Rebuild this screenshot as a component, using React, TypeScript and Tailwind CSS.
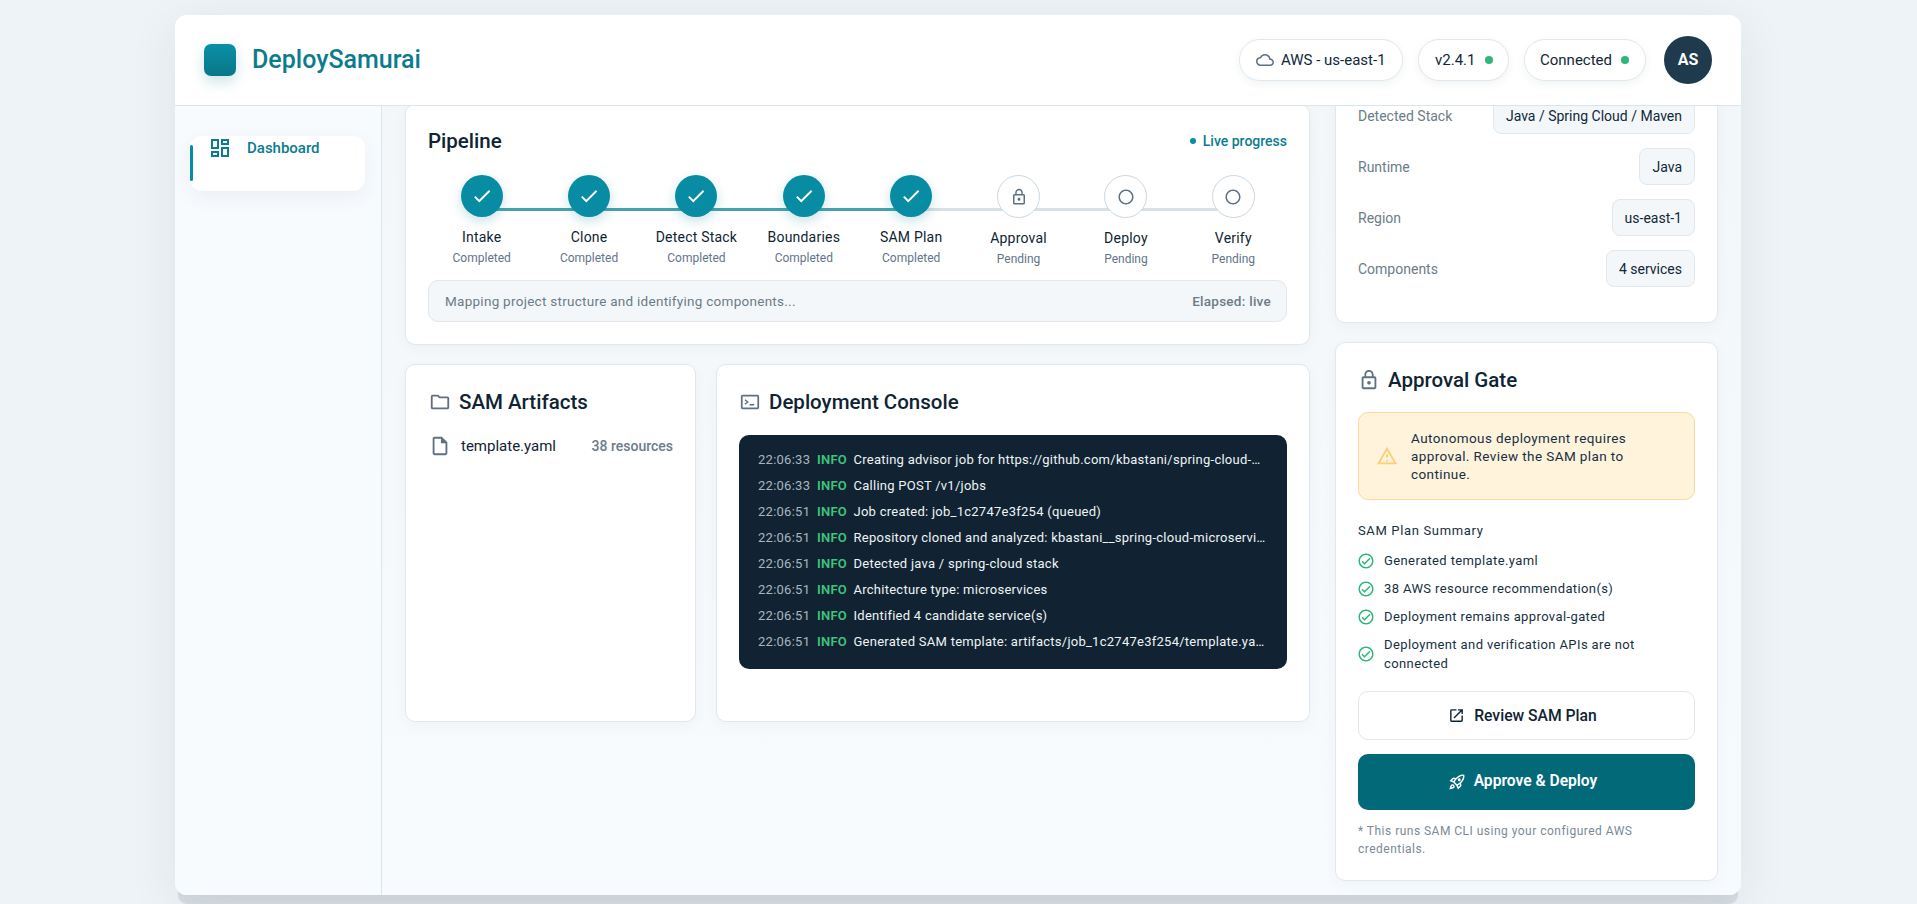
import React from "react";
import {
  MdCheck,
  MdLockOutline,
  MdOpenInNew,
  MdOutlineCheckCircle,
  MdOutlineCloud,
  MdOutlineDashboard,
  MdOutlineFolder,
  MdOutlineInsertDriveFile,
  MdOutlineRocketLaunch,
  MdOutlineWarningAmber,
  MdRadioButtonUnchecked,
} from "react-icons/md";

const steps = [
  ["Intake", "Completed", "done"],
  ["Clone", "Completed", "done"],
  ["Detect Stack", "Completed", "done"],
  ["Boundaries", "Completed", "done"],
  ["SAM Plan", "Completed", "done"],
  ["Approval", "Pending", "lock"],
  ["Deploy", "Pending", "idle"],
  ["Verify", "Pending", "idle"],
];

const logs = [
  ["22:06:33", "Creating advisor job for https://github.com/kbastani/spring-cloud-…"],
  ["22:06:33", "Calling POST /v1/jobs"],
  ["22:06:51", "Job created: job_1c2747e3f254 (queued)"],
  ["22:06:51", "Repository cloned and analyzed: kbastani__spring-cloud-microservi…"],
  ["22:06:51", "Detected java / spring-cloud stack"],
  ["22:06:51", "Architecture type: microservices"],
  ["22:06:51", "Identified 4 candidate service(s)"],
  ["22:06:51", "Generated SAM template: artifacts/job_1c2747e3f254/template.ya…"],
];

const facts = [
  ["Detected Stack", "Java / Spring Cloud / Maven"],
  ["Runtime", "Java"],
  ["Region", "us-east-1"],
  ["Components", "4 services"],
];

const summary = [
  "Generated template.yaml",
  "38 AWS resource recommendation(s)",
  "Deployment remains approval-gated",
  "Deployment and verification APIs are not connected",
];

function Card({ className, children }: { className?: string; children: React.ReactNode }) {
  return (
    <div className={"rounded-[10px] border border-[#e0e8ed] bg-white shadow-[0_4px_14px_rgba(20,50,70,0.04)] " + (className ?? "")}>
      {children}
    </div>
  );
}

function Pill({ className, children }: { className?: string; children: React.ReactNode }) {
  return (
    <div className={"flex h-[42px] items-center rounded-full border border-[#dfe8ed] bg-white text-[15px] text-[#10283a] shadow-[0_3px_10px_rgba(20,50,70,0.06)] " + (className ?? "")}>
      {children}
    </div>
  );
}

function TerminalIcon() {
  return (
    <svg viewBox="0 0 24 24" className="h-[22px] w-[22px] text-[#5f7180]" fill="none" stroke="currentColor" strokeWidth="1.9">
      <rect x="3" y="5" width="18" height="14" rx="1" />
      <path d="M6.5 9.5 9.5 12l-3 2.5M11.5 15h5" strokeWidth="1.6" />
    </svg>
  );
}

export default function App() {
  return (
    <div className="flex h-[904px] justify-center overflow-hidden bg-[#eef3f7] pt-[15px] font-['Roboto',sans-serif]">
      <div className="ml-[-1px] flex h-[880px] w-[1566px] flex-col overflow-hidden rounded-[12px] bg-white shadow-[0_12px_1px_-3px_rgba(20,40,55,0.11),0_10px_50px_rgba(20,40,55,0.08)]">
        <header className="flex h-[91px] shrink-0 items-center justify-between border-b border-[#dbe6ec] bg-white pl-[29px] pr-[29px]">
          <div className="flex items-center gap-[16px]">
            <div className="h-[32px] w-[32px] rounded-[7px] bg-gradient-to-b from-[#0a90a6] to-[#0a7688] shadow-[0_6px_14px_rgba(10,120,140,0.2)]" />
            <span className="text-[25px] font-medium text-[#0b7c8e]">DeploySamurai</span>
          </div>
          <div className="flex items-center">
            <Pill className="w-[164px] gap-[7px] pl-[16px]">
              <MdOutlineCloud className="h-[18px] w-[18px] text-[#5f7180]" />
              <span>AWS - us-east-1</span>
            </Pill>
            <Pill className="ml-[15px] w-[91px] pl-[16px]">
              <span>v2.4.1</span>
              <span className="ml-[10px] h-[8px] w-[8px] rounded-full bg-[#2fb67c]" />
            </Pill>
            <Pill className="ml-[15px] w-[122px] pl-[15px]">
              <span>Connected</span>
              <span className="ml-[9px] h-[8px] w-[8px] rounded-full bg-[#2fb67c]" />
            </Pill>
            <div className="ml-[18px] flex h-[48px] w-[48px] items-center justify-center rounded-full bg-[#1e3a4c] text-[16px] font-bold text-white">
              AS
            </div>
          </div>
        </header>

        <div className="flex min-h-0 flex-1">
          <aside className="w-[207px] shrink-0 border-r border-[#dbe6ec] bg-[#f8fbfe] pl-[15px] pr-[16px] pt-[30px]">
            <div className="relative flex h-[55px] items-start gap-[15px] rounded-[12px] bg-white pl-[18px] shadow-[0_6px_20px_rgba(20,50,70,0.06)]">
              <span className="absolute left-0 top-[9px] h-[36px] w-[3px] rounded-full bg-[#078ca3]" />
              <MdOutlineDashboard className="h-[24px] w-[24px] text-[#0b7c8e]" />
              <span className="pt-[2px] text-[15px] font-medium leading-[20px] text-[#0b7c8e]">Dashboard</span>
            </div>
          </aside>

          <main className="flex min-w-0 flex-1 gap-[25px] overflow-hidden bg-gradient-to-b from-[#f3f7f9] to-[#f8fbfe] pl-[23px] pr-[23px]">
            <div className="-mt-[2px] flex w-[905px] shrink-0 flex-col gap-[19px]">
              <Card className="h-[241px] px-[22px] pt-[22px]">
                <div className="flex h-[28px] items-center justify-between">
                  <span className="text-[20.5px] font-medium text-[#0f2433]">Pipeline</span>
                  <span className="flex items-center gap-[7px] text-[14px] font-medium text-[#0b7c8e]">
                    <span className="h-[6px] w-[6px] rounded-full bg-[#078ca3]" />
                    Live progress
                  </span>
                </div>
                <div className="mt-[20px] flex">
                  {steps.map(([label, status, kind], i) => (
                    <div key={label} className="relative flex flex-1 flex-col items-center">
                      {i < steps.length - 1 && (
                        <span className={"absolute left-1/2 top-[33px] h-[3px] w-full " + (i < 4 ? "bg-[#45a3b0]" : "bg-[#d6e0e5]")} />
                      )}
                      {kind === "done" ? (
                        <div className="relative flex h-[42px] w-[42px] items-center justify-center rounded-full bg-[#078ca3] shadow-[0_4px_12px_rgba(10,120,140,0.22)]">
                          <MdCheck className="h-[22px] w-[22px] text-white" />
                        </div>
                      ) : (
                        <div className="relative flex h-[43px] w-[43px] items-center justify-center rounded-full border border-[#ccd7de] bg-white text-[#5f7180]">
                          {kind === "lock" ? (
                            <MdLockOutline className="h-[18px] w-[18px]" />
                          ) : (
                            <MdRadioButtonUnchecked className="h-[18px] w-[18px]" />
                          )}
                        </div>
                      )}
                      <span className="mt-[10px] text-[14px] leading-[20px] tracking-[0.015em] text-[#0f2433]">{label}</span>
                      <span className="mt-[3px] text-[12px] leading-[16px] text-[#64748b]">{status}</span>
                    </div>
                  ))}
                </div>
                <div className="mt-[13px] flex h-[42px] items-center justify-between rounded-[10px] border border-[#e0e8ed] bg-[#f4f7f9] pl-[16px] pr-[15px] text-[13.5px] text-[#6b7c88]">
                  <span className="tracking-[0.02em]">Mapping project structure and identifying components...</span>
                  <span className="font-medium tracking-[0.02em]">Elapsed: live</span>
                </div>
              </Card>

              <div className="flex h-[358px] gap-[20px]">
                <Card className="w-[291px] shrink-0 pl-[23px] pr-[22px] pt-[23px]">
                  <div className="flex h-[28px] items-center gap-[8px]">
                    <MdOutlineFolder className="h-[22px] w-[22px] text-[#5f7180]" />
                    <span className="text-[20.5px] font-medium text-[#0f2433]">SAM Artifacts</span>
                  </div>
                  <div className="mt-[18px] flex h-[24px] items-center">
                    <MdOutlineInsertDriveFile className="h-[22px] w-[22px] text-[#5f7180]" />
                    <span className="ml-[10px] text-[15px] text-[#0f2433]">template.yaml</span>
                    <span className="ml-auto text-[14px] font-medium text-[#6b7c88]">38 resources</span>
                  </div>
                </Card>
                <Card className="min-w-0 flex-1 px-[22px] pt-[23px]">
                  <div className="flex h-[28px] items-center gap-[8px]">
                    <TerminalIcon />
                    <span className="text-[20.5px] font-medium text-[#0f2433]">Deployment Console</span>
                  </div>
                  <div className="mt-[19px] rounded-[10px] bg-[#112332] pb-[14px] pl-[19px] pr-[18px] pt-[12px] text-[13px] leading-[26px] tracking-[0.02em]">
                    {logs.map(([time, msg], i) => (
                      <div key={i} className="flex h-[26px] whitespace-nowrap">
                        <span className="w-[59px] shrink-0 text-[#aab6bf]">{time}</span>
                        <span className="w-[36.5px] shrink-0 font-semibold text-[#3cc47c]">INFO</span>
                        <span className="min-w-0 flex-1 text-[#eef3f6]">{msg}</span>
                      </div>
                    ))}
                  </div>
                </Card>
              </div>
            </div>

            <div className="-mt-[60px] flex w-[383px] shrink-0 flex-col gap-[19px]">
              <Card className="flex h-[277px] shrink-0 flex-col gap-[14px] px-[22px] pt-[50px]">
                {facts.map(([k, v]) => (
                  <div key={k} className="flex items-center justify-between">
                    <span className="pt-[1px] text-[14px] text-[#6b7c88]">{k}</span>
                    <span className="flex h-[37px] items-center rounded-[8px] border border-[#e0e8ed] bg-[#f4f7f9] px-[12px] pt-[1px] text-[14px] text-[#10283a]">
                      {v}
                    </span>
                  </div>
                ))}
              </Card>

              <Card className="h-[539px] shrink-0 px-[22px] pt-[23px]">
                <div className="flex h-[28px] items-center gap-[8px]">
                  <MdLockOutline className="h-[22px] w-[22px] text-[#5f7180]" />
                  <span className="text-[20.5px] font-medium text-[#0f2433]">Approval Gate</span>
                </div>
                <div className="mt-[18px] flex h-[88px] items-center rounded-[10px] border border-[#fbd99b] bg-[#fff3dc] pl-[17px]">
                  <MdOutlineWarningAmber className="h-[22px] w-[22px] shrink-0 text-[#fcd07a]" />
                  <p className="ml-[13px] w-[258px] text-[13.5px] leading-[18px] tracking-[0.03em] text-[#173042]">
                    Autonomous deployment requires approval. Review the SAM plan to continue.
                  </p>
                </div>
                <div className="mt-[21px] text-[13px] leading-[20px] tracking-[0.05em] text-[#173042]">SAM Plan Summary</div>
                <div className="mt-[10px] flex flex-col gap-[9px]">
                  {summary.map((s) => (
                    <div key={s} className="flex items-center gap-[9px] ml-[-1px]">
                      <MdOutlineCheckCircle className="h-[18px] w-[18px] shrink-0 text-[#2fb67c]" />
                      <span className="text-[13px] leading-[19px] tracking-[0.03em] text-[#173042]">{s}</span>
                    </div>
                  ))}
                </div>
                <button className="mt-[18px] flex h-[49px] w-full items-center justify-center gap-[9px] rounded-[10px] border border-[#e0e8ed] bg-white pr-[8px] text-[15.7px] font-medium text-[#0f2433]">
                  <MdOpenInNew className="h-[17px] w-[17px]" />
                  Review SAM Plan
                </button>
                <button className="mt-[14px] flex h-[56px] w-full items-center justify-center gap-[8px] rounded-[10px] bg-[#026978] pr-[8px] text-[15.6px] font-semibold text-white">
                  <MdOutlineRocketLaunch className="h-[18px] w-[18px]" />
                  Approve &amp; Deploy
                </button>
                <p className="mt-[12px] text-[12px] leading-[18px] tracking-[0.04em] text-[#7b8a96]">
                  * This runs SAM CLI using your configured AWS credentials.
                </p>
              </Card>
            </div>
          </main>
        </div>
      </div>
    </div>
  );
}
